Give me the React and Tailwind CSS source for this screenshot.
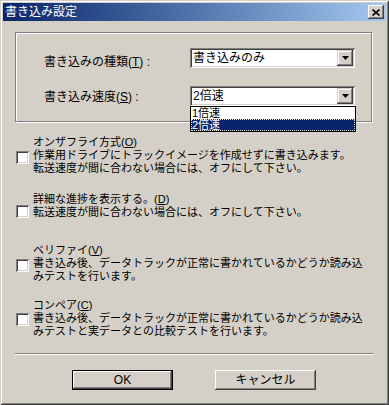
import React from "react";

const sunken =
  "shadow-[inset_1px_1px_0_#808080,inset_-1px_-1px_0_#ffffff,inset_2px_2px_0_#404040,inset_-2px_-2px_0_#d4d0c8]";
const raised =
  "shadow-[inset_-1px_-1px_0_#404040,inset_1px_1px_0_#ffffff,inset_-2px_-2px_0_#808080,inset_2px_2px_0_#d4d0c8]";
const raisedThin =
  "shadow-[inset_-1px_-1px_0_#404040,inset_1px_1px_0_#d4d0c8,inset_-2px_-2px_0_#808080,inset_2px_2px_0_#ffffff]";

const checks = [
  {
    key: "fly",
    wrap: "mt-[14px]",
    box: "mt-[15px]",
    title: <>オンザフライ方式(<u>O</u>)</>,
    lines: ["作業用ドライブにトラックイメージを作成せずに書き込みます。", "転送速度が間に合わない場合には、オフにして下さい。"],
  },
  {
    key: "detail",
    wrap: "mt-[18px]",
    box: "mt-[12px]",
    title: <>詳細な進捗を表示する。(<u>D</u>)</>,
    lines: ["転送速度が間に合わない場合には、オフにして下さい。"],
  },
  {
    key: "verify",
    wrap: "mt-[25px]",
    box: "mt-[15px]",
    title: <>ベリファイ(<u>V</u>)</>,
    lines: ["書き込み後、データトラックが正常に書かれているかどうか読み込", "みテストを行います。"],
  },
  {
    key: "compare",
    wrap: "mt-[16px]",
    box: "mt-[14px]",
    title: <>コンペア(<u>C</u>)</>,
    lines: ["書き込み後、データトラックが正常に書かれているかどうか読み込", "みテストと実データとの比較テストを行います。"],
  },
];

const Arrow = () => (
  <svg width="7" height="4" viewBox="0 0 7 4">
    <path d="M0 0h7L3.5 4z" fill="#000" />
  </svg>
);

const Combo = ({ value, children }) => (
  <div className={`relative w-[165px] h-[20px] bg-white ${sunken} flex items-center`}>
    <span className="pl-[3px] text-[12px] leading-[13px] text-black">{value}</span>
    <div className={`absolute right-[2px] top-[2px] w-[16px] h-[16px] bg-[#d4d0c8] ${raisedThin} flex items-center justify-center`}>
      <Arrow />
    </div>
    {children}
  </div>
);

export default function App() {
  return (
    <div
      className={`w-[389px] h-[405px] bg-[#d4d0c8] p-[3px] text-[11px] leading-[13px] text-black font-['Liberation_Sans','Noto_Sans_CJK_JP',sans-serif] shadow-[inset_1px_1px_0_#d4d0c8,inset_-1px_-1px_0_#404040,inset_2px_2px_0_#ffffff,inset_-2px_-2px_0_#808080] flex flex-col`}
    >
      {/* title bar */}
      <div className="h-[18px] flex items-center justify-between bg-gradient-to-r from-[#0a246a] to-[#a6caf0] pl-[2px] pr-[2px]">
        <span className="text-white text-[12px] leading-[14px]">書き込み設定</span>
        <div className={`w-[16px] h-[14px] bg-[#d4d0c8] ${raised} flex items-center justify-center`}>
          <svg width="8" height="7" viewBox="0 0 8 7">
            <path d="M0.5 0.5l7 6M7.5 0.5l-7 6" stroke="#000" strokeWidth="1.6" />
          </svg>
        </div>
      </div>

      {/* group box */}
      <div className="ml-[12px] mt-[11px] w-[357px] h-[90px] border border-[#808080] shadow-[inset_1px_1px_0_#ffffff,1px_1px_0_#ffffff] pt-[15px] pl-[28px] flex flex-col gap-[17px]">
        <div className="flex items-start">
          <span className="w-[146px] mt-[8px] text-[12px]">
            書き込みの種類(<u>T</u>) :
          </span>
          <Combo value="書き込みのみ" />
        </div>
        <div className="flex items-start">
          <span className="w-[146px] mt-[5px] text-[12px]">
            書き込み速度(<u>S</u>) :
          </span>
          <Combo value="2倍速">
            <div className="absolute left-0 top-[20px] w-[166px] h-[26px] bg-white border border-black z-10 flex flex-col">
              <div className="h-[12px] pl-[1px] text-[11px] leading-[12px] overflow-hidden">1倍速</div>
              <div className="h-[12px] pl-[1px] text-[11px] leading-[12px] overflow-hidden bg-[#0a246a] text-white outline outline-1 outline-dotted outline-[#e8e4d8] -outline-offset-1">
                2倍速
              </div>
            </div>
          </Combo>
        </div>
      </div>

      {/* checkboxes */}
      {checks.map((c) => (
        <div key={c.key} className={`${c.wrap} flex pl-[13px]`}>
          <div className={`${c.box} w-[13px] h-[13px] bg-white ${sunken} shrink-0`} />
          <div className="ml-[4px] flex flex-col">
            <span>{c.title}</span>
            {c.lines.map((l) => (
              <span key={l} className="whitespace-nowrap">{l}</span>
            ))}
          </div>
        </div>
      ))}

      {/* separator */}
      <div className="ml-[12px] mt-[15px] w-[358px] h-[2px] border-t border-t-[#808080] border-b border-b-white" />

      {/* buttons */}
      <div className="mt-[15px] flex pl-[69px] gap-[42px]">
        <div className="w-[101px] h-[20px] border border-black">
          <div className={`w-full h-full ${raised} flex items-center justify-center text-[12px]`}>OK</div>
        </div>
        <div className={`w-[101px] h-[20px] ${raised} flex items-center justify-center text-[12px]`}>キャンセル</div>
      </div>
    </div>
  );
}
